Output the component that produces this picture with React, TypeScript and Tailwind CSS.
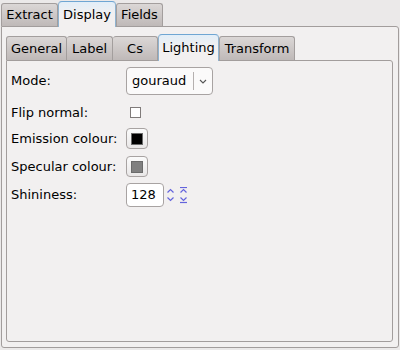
import React from "react";

const tabOff =
  "flex items-center justify-center h-[23px] border border-b-0 border-[#a39e9d] rounded-t-[3px] bg-gradient-to-b from-[#dbd7d6] to-[#bfb9b8]";
const tabOn =
  "relative z-10 flex items-center justify-center -mb-px border border-b-0 border-[#8fb3d0] border-t-[#6fa6d3] rounded-t-[4px] bg-gradient-to-b from-[#e2eef8] via-[#f2f0f0] to-[#f2f0f0]";

function SpinArrows() {
  return (
    <div className="ml-[2px] flex items-center gap-[4px]">
      <svg width="9" height="17" viewBox="0 0 9 17" className="text-[#6464dc]">
        <polyline points="1.5,5.5 4.5,2.5 7.5,5.5" fill="none" stroke="currentColor" strokeWidth="1.2" />
        <polyline points="1.5,10.5 4.5,13.5 7.5,10.5" fill="none" stroke="currentColor" strokeWidth="1.2" />
      </svg>
      <svg width="9" height="17" viewBox="0 0 9 17" className="text-[#6464dc]">
        <line x1="1" y1="0.5" x2="8" y2="0.5" stroke="currentColor" strokeWidth="1.2" />
        <polyline points="1.5,5.5 4.5,2.5 7.5,5.5" fill="none" stroke="currentColor" strokeWidth="1.2" />
        <polyline points="1.5,10.5 4.5,13.5 7.5,10.5" fill="none" stroke="currentColor" strokeWidth="1.2" />
        <line x1="1" y1="15.5" x2="8" y2="15.5" stroke="currentColor" strokeWidth="1.2" />
      </svg>
    </div>
  );
}

function Swatch({ color }: { color: string }) {
  return (
    <div className="flex h-[21px] w-[22px] items-center justify-center rounded-[4px] border border-[#a8a3a2] bg-gradient-to-b from-[#fbfbfb] to-[#e9e7e7]">
      <div className="h-[12px] w-[12px] border border-[#6b6b6b]" style={{ background: color }} />
    </div>
  );
}

export default function App() {
  return (
    <div className="h-[350px] w-[400px] overflow-hidden bg-[#ebe9e9] font-['DejaVu_Sans',sans-serif] text-[13px] text-black">
      <div className="flex h-[26px] items-end pl-[1px]">
        <div className={`${tabOff} w-[57px]`}>Extract</div>
        <div className={`${tabOn} h-[26px] w-[58px]`}>Display</div>
        <div className={`${tabOff} w-[47px]`}>Fields</div>
      </div>

      <div className="ml-[1px] h-[322px] w-[398px] rounded-b-[3px] rounded-tr-[3px] border border-[#a29d9c] bg-[#f2f0f0] pl-[4px] pt-[6px]">
        <div className="flex h-[27px] items-end">
          <div className={`${tabOff} h-[24px] w-[61px]`}>General</div>
          <div className={`${tabOff} h-[24px] w-[46px] border-l-0`}>Label</div>
          <div className={`${tabOff} h-[24px] w-[45px] border-l-0`}>Cs</div>
          <div className={`${tabOn} h-[27px] w-[61px]`}>Lighting</div>
          <div className={`${tabOff} h-[24px] w-[76px]`}>Transform</div>
        </div>

        <div className="h-[282px] w-[387px] rounded-b-[3px] rounded-tr-[3px] border border-[#a29d9c] bg-[#f2f0f0] pl-[4px] pt-[6px]">
          <div className="flex h-[28px] items-center">
            <div className="w-[115px]">Mode:</div>
            <div className="flex h-[28px] w-[87px] items-center rounded-[4px] border border-[#a8a3a2] bg-[#fbfafa]">
              <span className="w-[66px] pl-[5px]">gouraud</span>
              <div className="h-[18px] w-px bg-[#b5b0af]" />
              <div className="flex flex-1 justify-center">
                <svg width="8" height="5" viewBox="0 0 8 5">
                  <polyline points="1,1 4,4 7,1" fill="none" stroke="#555" strokeWidth="1.1" />
                </svg>
              </div>
            </div>
          </div>

          <div className="mt-[9px] flex h-[17px] items-center">
            <div className="w-[115px]">Flip normal:</div>
            <div className="ml-[4px] h-[11px] w-[11px] border border-[#807b7a] bg-white" />
          </div>

          <div className="mt-[7px] flex h-[21px] items-center">
            <div className="w-[115px]">Emission colour:</div>
            <Swatch color="#000000" />
          </div>

          <div className="mt-[7px] flex h-[21px] items-center">
            <div className="w-[115px]">Specular colour:</div>
            <Swatch color="#808080" />
          </div>

          <div className="mt-[6px] flex h-[24px] items-center">
            <div className="w-[115px]">Shininess:</div>
            <div className="flex h-[24px] w-[38px] items-center rounded-[4px] border border-[#a8a3a2] bg-white pl-[4px]">128</div>
            <SpinArrows />
          </div>
        </div>
      </div>
    </div>
  );
}
